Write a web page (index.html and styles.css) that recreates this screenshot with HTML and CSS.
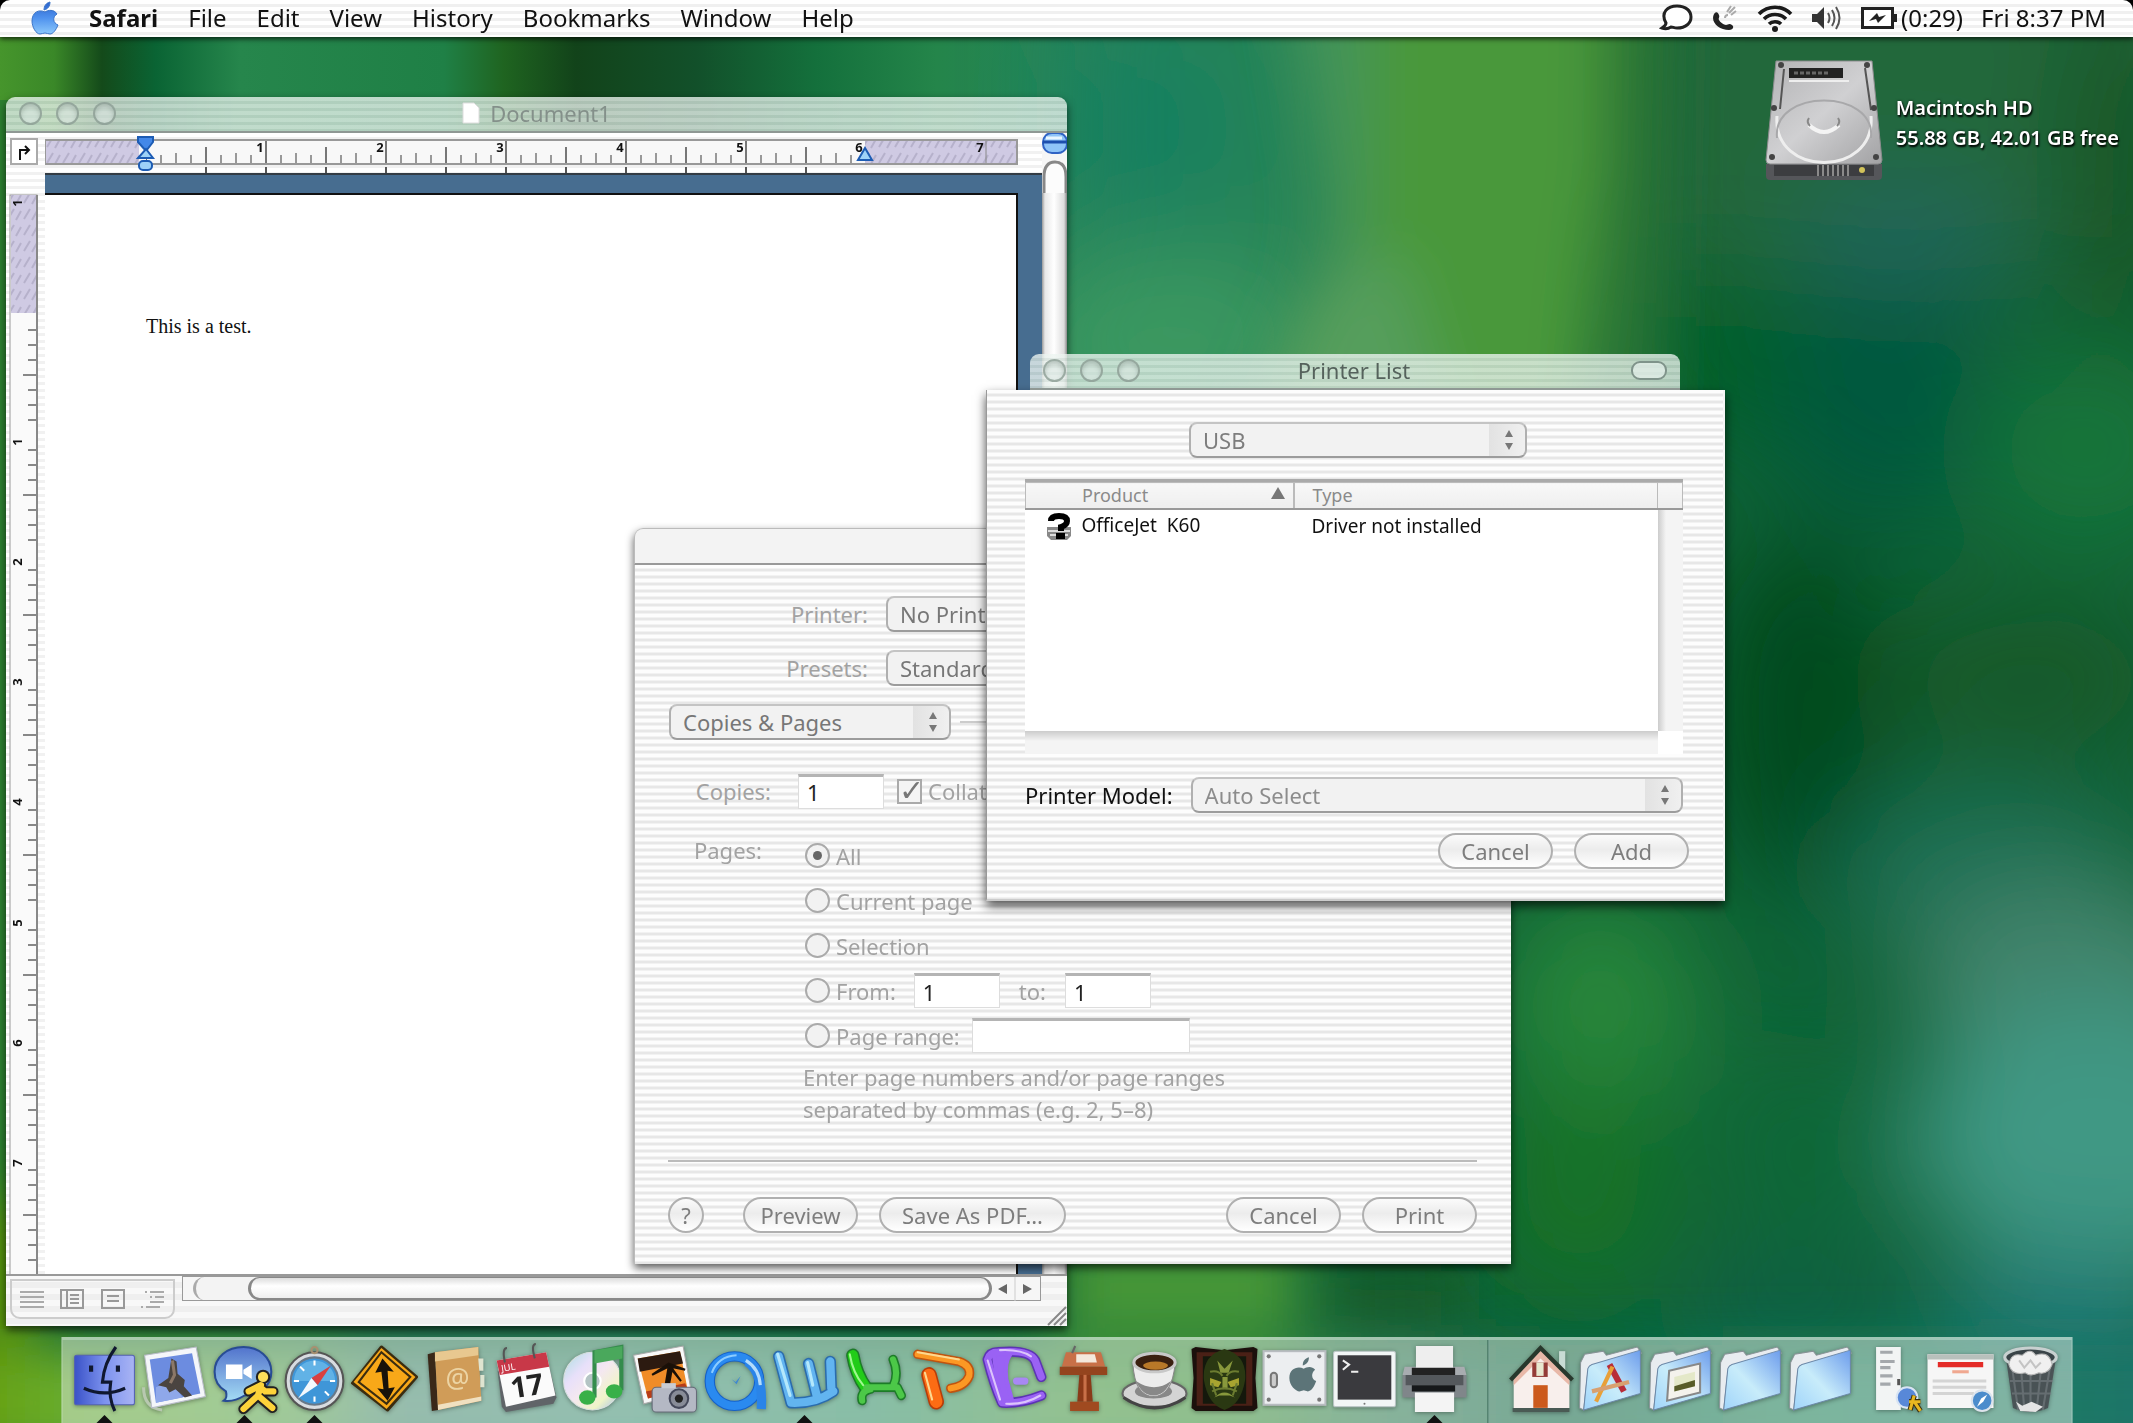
FILE: index.html
```html
<!DOCTYPE html>
<html lang="en">
<head>
<meta charset="utf-8">
<title>Desktop</title>
<link rel="stylesheet" href="styles.css">
</head>
<body>
<svg class="wallpaper" viewBox="0 0 2133 1423" preserveAspectRatio="none" aria-hidden="true">
  <defs>
    <filter id="b1" x="-50%" y="-50%" width="200%" height="200%"><feGaussianBlur stdDeviation="28"/></filter>
    <filter id="b2" x="-50%" y="-50%" width="200%" height="200%"><feGaussianBlur stdDeviation="50"/></filter>
    <linearGradient id="strip" x1="0" x2="1" y1="0" y2="0">
      <stop offset="0" stop-color="#46952c"/><stop offset=".045" stop-color="#3a8828"/><stop offset=".085" stop-color="#144a1a"/><stop offset=".13" stop-color="#0a6434"/><stop offset=".2" stop-color="#26864c"/><stop offset=".37" stop-color="#1f8046"/><stop offset=".42" stop-color="#1f6420"/><stop offset=".48" stop-color="#12431a"/><stop offset=".58" stop-color="#12502a"/><stop offset=".68" stop-color="#14703c"/><stop offset=".78" stop-color="#24854a"/><stop offset=".87" stop-color="#258458"/><stop offset="1" stop-color="#27805f"/>
    </linearGradient>
    <linearGradient id="low" x1="0" x2="1" y1="0" y2="0">
      <stop offset="0" stop-color="#659a00"/><stop offset=".06" stop-color="#6aaf30"/><stop offset=".16" stop-color="#5fa850"/><stop offset=".2" stop-color="#4c8c78"/><stop offset=".3" stop-color="#45947e"/><stop offset=".42" stop-color="#2f9068"/><stop offset=".5" stop-color="#45983c"/><stop offset=".57" stop-color="#3f9336"/><stop offset=".64" stop-color="#2d7a55"/><stop offset=".72" stop-color="#0c6244"/><stop offset=".82" stop-color="#148058"/><stop offset="1" stop-color="#20746c"/>
    </linearGradient>
  </defs>
  <rect width="2133" height="1423" fill="#0f6236"/>
  <rect width="1200" height="700" fill="url(#strip)"/>
  <rect y="100" width="40" height="1230" fill="#2c8030"/>
  <g filter="url(#b2)">
    <rect x="1075" y="-60" width="300" height="500" fill="#268456"/>
    <ellipse cx="1150" cy="130" rx="80" ry="110" fill="#178060"/>
    <ellipse cx="1160" cy="350" rx="150" ry="100" fill="#3a9860"/>
    <rect x="1640" y="-60" width="560" height="330" fill="#22683a"/>
    <ellipse cx="1900" cy="240" rx="110" ry="70" fill="#21665a"/>
    <ellipse cx="1740" cy="360" rx="90" ry="80" fill="#005e28"/>
    <ellipse cx="1890" cy="400" rx="120" ry="120" fill="#00583c"/>
    <ellipse cx="2120" cy="170" rx="50" ry="190" fill="#125224"/>
    <ellipse cx="2090" cy="450" rx="120" ry="100" fill="#18743a"/>
    <ellipse cx="1800" cy="710" rx="90" ry="180" fill="#02481e"/>
    <ellipse cx="2030" cy="680" rx="150" ry="90" fill="#195a2c"/>
    <ellipse cx="1980" cy="870" rx="150" ry="80" fill="#1a7054"/>
    <ellipse cx="2070" cy="980" rx="160" ry="100" fill="#43836a"/>
    <ellipse cx="2100" cy="1140" rx="190" ry="140" fill="#3f9884"/>
    <ellipse cx="1600" cy="1010" rx="100" ry="120" fill="#26863a"/>
    <ellipse cx="1580" cy="1190" rx="90" ry="110" fill="#137228"/>
    <ellipse cx="1800" cy="1150" rx="90" ry="120" fill="#0a6838"/>
    <ellipse cx="1790" cy="1320" rx="130" ry="60" fill="#085f44"/>
    <ellipse cx="2060" cy="1340" rx="130" ry="90" fill="#1d7670"/>
  </g>
  <g filter="url(#b1)">
    <path d="M1300-60 1620-60 1600 200 1580 460 1340 460 1370 200z" fill="#4a983a"/>
    <path d="M1280-60 1370-60 1370 200 1340 460 1290 460 1320 200z" fill="#45945a"/>
    <path d="M1300 300 1400 250 1460 460 1240 460z" fill="#559e5c"/>
    <path d="M1605-60 1670-60 1660 420 1600 420z" fill="#2a7436"/>
    <rect x="-60" y="1345" width="2260" height="120" fill="url(#low)"/>
    <rect x="1060" y="1240" width="240" height="90" fill="#4a9a38"/>
    <rect x="1340" y="1270" width="120" height="60" fill="#155a28"/>
    <rect x="-30" y="1200" width="60" height="150" fill="#619400"/>
  </g>
</svg>

<header class="menubar">
  <nav class="menus" aria-label="Application menus">
    <button class="menu apple" aria-label="Apple menu"><svg viewBox="0 0 28 34"><defs><linearGradient id="ap" x1="0" x2="0" y1="0" y2="1"><stop offset="0" stop-color="#2a62cc"/><stop offset=".5" stop-color="#4f92ee"/><stop offset="1" stop-color="#8cc8fb"/></linearGradient></defs><path fill="url(#ap)" stroke="#3a74c8" d="M19 1c0 4-2 7-6 8 0-4 2-7 6-8zM14 11c3-2 9-3 12 2-5 3-4 9 1 11-2 5-5 9-8 9-2 0-3-1-5-1s-3 1-5 1C5 33 1 26 1 20c0-9 7-12 13-9z"/></svg></button>
    <button class="menu app-name">Safari</button>
    <button class="menu">File</button>
    <button class="menu">Edit</button>
    <button class="menu">View</button>
    <button class="menu">History</button>
    <button class="menu">Bookmarks</button>
    <button class="menu">Window</button>
    <button class="menu">Help</button>
  </nav>
  <div class="extras">
    <svg width="34" height="28" viewBox="0 0 34 28"><path d="M3 24c3-2 4-3 4-5C1 8 9 2 18 2s14 5 14 11-5 11-14 11c-3 0-4-1-6-1-3 2-6 2-9 1z" fill="#fff" stroke="#222" stroke-width="3"/></svg>
    <svg width="28" height="28" viewBox="0 0 28 28"><path d="M3 10c2-3 4-2 5 1s-1 3 0 5 5 5 7 5 3-2 6 0 0 5-3 5C8 26-1 18 3 10z" fill="#222"/><path d="M14 14c0-2 1-3 3-3M18 9l6-6M20 11l5-4M16 8l4-6" stroke="#aaa" stroke-width="2" fill="none"/></svg>
    <svg width="36" height="28" viewBox="0 0 36 28"><g fill="none" stroke="#1a1a1a" stroke-width="3.6"><path d="M2 10c9-9 23-9 32 0M7 15c6-6 16-6 22 0M12 20c3-3 9-3 12 0"/></g><circle cx="18" cy="25" r="3" fill="#1a1a1a"/></svg>
    <svg width="32" height="28" viewBox="0 0 32 28"><path d="M1 10h5l7-7v22l-7-7H1z" fill="#333"/><path d="M17 9q3 5 0 10M21 6q5 8 0 16M25 3q7 11 0 22" fill="none" stroke="#555" stroke-width="2"/></svg>
    <span class="battery"><svg width="36" height="24" viewBox="0 0 36 24"><rect x="1.500" y="2.500" width="30" height="19" fill="#fff" stroke="#222" stroke-width="3"/><path d="M33 8h3v8h-3z" fill="#222"/><path d="M8 15l8-8 2 4 7-2-8 8-2-4z" fill="#222"/></svg>(0:29)</span>
    <time>Fri 8:37 PM</time>
  </div>
</header>

<main class="desktop">
  <a class="disk" href="#disk">
    <svg width="120" height="130" viewBox="0 0 120 130"><defs><linearGradient id="hd" x1="0" x2="1" y1="0" y2="1"><stop offset="0" stop-color="#b2b2b4"/><stop offset=".5" stop-color="#d0d0d2"/><stop offset="1" stop-color="#a2a2a4"/></linearGradient></defs>
    <path d="M2 106h116v12q0 4-4 4H6q-4 0-4-4z" fill="#55565a"/><path d="M10 107h100v11H10z" fill="#3c3d40"/><path d="M54 107v11m5-11v11m5-11v11m5-11v11m5-11v11m5-11v11m5-11v11" stroke="#8a8a8a" stroke-width="2"/><circle cx="98" cy="112" r="3" fill="#d2c35a"/>
    <path d="M12 3h96l10 99q0 4-4 4H6q-4 0-4-4z" fill="url(#hd)" stroke="#8b8b8d"/>
    <path d="M13 58C8 120 112 120 107 58" fill="none" stroke="#eee" stroke-width="3"/><path d="M13 80C8 30 112 30 107 80" fill="none" stroke="#a8a8aa" stroke-width="2"/>
    <path d="M45 67q15 14 30 0" fill="none" stroke="#f4f4f4" stroke-width="4"/><path d="M45 60q-3 4 1 8m28-8q3 4-1 8" stroke="#888" fill="none" stroke-width="2"/>
    <path d="M25 10h54v10H25z" fill="#222"/><path d="M30 15h36" stroke="#666" stroke-width="3" stroke-dasharray="4 2"/><path d="M25 23h60" stroke="#eee" stroke-width="2"/><path d="M101 10l6 42M20 11l-4 40" stroke="#555" stroke-width="2"/>
    <g fill="#444"><circle cx="17" cy="7" r="3"/><circle cx="103" cy="7" r="3"/><circle cx="10" cy="50" r="3"/><circle cx="110" cy="50" r="3"/><circle cx="8" cy="99" r="3"/><circle cx="112" cy="99" r="3"/></g></svg>
    <span class="disk-label">Macintosh HD<br>55.88 GB, 42.01 GB free</span>
  </a>

  <section class="window document" aria-label="Document1">
    <div class="titlebar">
      <span class="lights"><button class="light" aria-label="Close"></button><button class="light" aria-label="Minimize"></button><button class="light" aria-label="Zoom"></button></span>
      <h1 class="title"><svg width="18" height="22" viewBox="0 0 18 22"><path d="M1 1h11l5 5v15H1z" fill="#fff" stroke="#ddd"/></svg>Document1</h1>
    </div>
    <div class="editor">
      <div class="left-rail">
        <button class="tab-stop" aria-label="Tab stop"><svg width="18" height="18" viewBox="0 0 18 18"><path d="M5 17V7h8M10 3l4 4-4 4" fill="none" stroke="#111" stroke-width="2"/></svg></button>
        <svg class="vruler" width="39" height="1102" viewBox="0 0 39 1102"><defs>
          <pattern id="hatch" width="16" height="16" patternUnits="userSpaceOnUse"><rect width="16" height="16" fill="#cfcae3"/><path d="M2 14l6-10M10 15l5-9" stroke="#b6b1cb" stroke-width="2"/></pattern>
          <pattern id="vt" y="142" width="39" height="120" patternUnits="userSpaceOnUse"><path d="M22 15h8m-8 15h8m-8 15h8m-13 15h13m-8 15h8m-8 15h8m-8 15h8" stroke="#888" stroke-width="2"/></pattern></defs>
          <rect x="4" y="22" width="27" height="1090" fill="#fafafa" stroke="#999"/><rect x="5" y="22" width="25" height="118" fill="url(#hatch)"/><rect x="4" y="142" width="27" height="970" fill="url(#vt)"/><path d="M31 22v1080" stroke="#888" stroke-width="2"/>
          <g font-size="13" font-weight="700" text-anchor="middle" fill="#111"><text transform="translate(16 30) rotate(-90)">1</text><text transform="translate(16 269) rotate(-90)">1</text><text transform="translate(16 389) rotate(-90)">2</text><text transform="translate(16 509) rotate(-90)">3</text><text transform="translate(16 629) rotate(-90)">4</text><text transform="translate(16 750) rotate(-90)">5</text><text transform="translate(16 870) rotate(-90)">6</text><text transform="translate(16 990) rotate(-90)">7</text></g>
        </svg>
      </div>
      <div class="page-column">
        <svg class="hruler" width="997" height="40" viewBox="0 0 997 40"><defs>
          <pattern id="ht" x="101" width="120" height="40" patternUnits="userSpaceOnUse"><path d="M0 7v23M120 7v23M60 14v16" stroke="#777" stroke-width="2"/><path d="M15 22v8m15-10v10m15-8v8m30-8v8m15-10v10m15-8v8" stroke="#999" stroke-width="2"/></pattern></defs>
          <rect x="0" y="7" width="972" height="24" fill="#f8f8f8"/><rect x="101" y="7" width="714" height="24" fill="url(#ht)"/><rect x="0" y="7" width="94" height="24" fill="url(#hatch)"/><rect x="820" y="7" width="152" height="24" fill="url(#hatch)"/><path d="M941 8v22" stroke="#888"/><rect x="0" y="7" width="972" height="24" fill="none" stroke="#999" stroke-width="2"/>
          <path d="M161 34v6m60-6v6m60-6v6m60-6v6m60-6v6m60-6v6m60-6v6m60-6v6m60-6v6m60-6v6m60-6v6" stroke="#555" stroke-width="2"/>
          <g font-size="13" font-weight="700" text-anchor="middle" fill="#111"><text x="215" y="19">1</text><text x="335" y="19">2</text><text x="455" y="19">3</text><text x="575" y="19">4</text><text x="695" y="19">5</text><text x="814" y="19">6</text><text x="935" y="19">7</text></g>
          <g fill="#9ed2f8" stroke="#1d5cb4" stroke-width="2"><path d="M93 4h15v5l-7 9-8-9z" fill="#4388e8"/><path d="M101 16l7 9H93z"/><rect x="94" y="28" width="13" height="9" rx="4"/><path d="M820 15l7 12h-14z"/></g>
        </svg>
        <div class="canvas"><article class="sheet">This is a test.</article></div>
      </div>
      <div class="vscroll">
        <svg width="25" height="60" viewBox="0 0 25 60"><rect x="1" y="0" width="24" height="20" rx="9" fill="#8fc4f8" stroke="#3063c4" stroke-width="2"/><path d="M1 9h24" stroke="#1d4fae" stroke-width="3"/><path d="M4 5h16" stroke="#e8f6ff" stroke-width="3"/><path d="M2 60V44Q2 29 13 29t11 15v16" fill="#fcfcfc" stroke="#888" stroke-width="3"/></svg>
      </div>
    </div>
    <div class="statusbar">
      <div class="views">
        <button aria-label="Normal view"><svg width="24" height="20" viewBox="0 0 24 20"><path d="M0 3h24M0 8h24M0 13h24M0 18h24" stroke="#aaa" stroke-width="2"/></svg></button>
        <button aria-label="Online layout view"><svg width="24" height="20" viewBox="0 0 24 20"><path d="M1 1h22v18H1zM7 1v18M10 6h9M10 10h9M10 14h9" fill="none" stroke="#999" stroke-width="2"/></svg></button>
        <button aria-label="Page layout view"><svg width="24" height="20" viewBox="0 0 24 20"><path d="M1 1h22v18H1zM6 7h12M6 12h12" fill="none" stroke="#999" stroke-width="2"/></svg></button>
        <button aria-label="Outline view"><svg width="24" height="20" viewBox="0 0 24 20"><path d="M0 18h2M5 18h14M4 3h2M9 3h14M9 8h2M14 8h9M9 13h14" stroke="#aaa" stroke-width="2"/></svg></button>
      </div>
      <div class="hscroll"><div class="htrack"><div class="thumb"></div></div>
        <svg width="48" height="24" viewBox="0 0 48 24"><path d="M15 7v10L6 12zM31 7v10l9-5z" fill="#666"/><path d="M23 0v24" stroke="#ccc"/></svg></div>
      <svg class="grip" width="22" height="22" viewBox="0 0 22 22"><path d="M3 21L21 3M9 21L21 9M15 21l6-6" stroke="#888" stroke-width="2"/></svg>
    </div>
  </section>

  <section class="window print" aria-label="Print">
    <div class="titlebar plain"></div>
    <form class="print-body">
      <div class="row"><label class="wide" for="printer">Printer:</label><span class="popup w400"><select id="printer"><option>No Printer Selected</option></select><svg width="10" height="20" viewBox="0 0 10 20"><path d="M5 0l4 7H1zM5 20l4-7H1z"/></svg></span></div>
      <div class="row"><label class="wide" for="presets">Presets:</label><span class="popup w400"><select id="presets"><option>Standard</option></select><svg width="10" height="20" viewBox="0 0 10 20"><path d="M5 0l4 7H1zM5 20l4-7H1z"/></svg></span></div>
      <div class="row section-row"><span class="popup w282"><select aria-label="Section"><option>Copies &amp; Pages</option></select><svg width="10" height="20" viewBox="0 0 10 20"><path d="M5 0l4 7H1zM5 20l4-7H1z"/></svg></span><span class="rule"></span></div>
      <div class="row copies"><label class="narrow" for="copies">Copies:</label><input class="field num" id="copies" type="text" value="1"><input class="check" type="checkbox" id="collate" checked><label for="collate">Collated</label></div>
      <fieldset class="pages">
        <legend>Pages:</legend>
        <div class="choices">
          <div class="choice"><input type="radio" name="pages" id="all" checked><label for="all">All</label></div>
          <div class="choice"><input type="radio" name="pages" id="current"><label for="current">Current page</label></div>
          <div class="choice"><input type="radio" name="pages" id="selection"><label for="selection">Selection</label></div>
          <div class="choice"><input type="radio" name="pages" id="from"><label for="from">From:</label><input class="field num first" type="text" value="1" aria-label="First page"><label class="to" for="last">to:</label><input class="field num" id="last" type="text" value="1"></div>
          <div class="choice"><input type="radio" name="pages" id="range"><label for="range">Page range:</label><input class="field long" type="text" aria-label="Page range"></div>
          <p class="hint">Enter page numbers and/or page ranges<br>separated by commas (e.g. 2, 5–8)</p>
        </div>
      </fieldset>
      <hr>
      <div class="actions"><button type="button" class="aqua help" aria-label="Help">?</button><button type="button" class="aqua w115">Preview</button><button type="button" class="aqua w187">Save As PDF…</button><span class="spring"></span><button type="button" class="aqua w115">Cancel</button><button type="button" class="aqua w115">Print</button></div>
    </form>
  </section>

  <section class="printer-list" aria-label="Printer List">
    <div class="titlebar list-title">
      <span class="lights"><button class="light" aria-label="Close"></button><button class="light" aria-label="Minimize"></button><button class="light" aria-label="Zoom"></button></span>
      <h2 class="title">Printer List</h2>
      <button class="pill" aria-label="Toggle toolbar"></button>
    </div>
    <form class="sheet-body">
      <span class="popup w338 centered"><select aria-label="Connection"><option>USB</option></select><svg width="10" height="20" viewBox="0 0 10 20"><path d="M5 0l4 7H1zM5 20l4-7H1z"/></svg></span>
      <div class="table-box">
        <table>
          <thead><tr><th class="product">Product<svg width="14" height="12" viewBox="0 0 14 12"><path d="M7 0l7 12H0z" fill="#777"/></svg></th><th class="type">Type</th><th class="corner"></th></tr></thead>
          <tbody><tr><td class="product"><svg width="28" height="28" viewBox="0 0 28 28"><path d="M2 14h24v9l-4 4H6l-4-4z" fill="#888"/><path d="M3 18h22M5 22h18" stroke="#ddd" stroke-width="2"/><path d="M6 8q0-5 8-5t8 5q0 4-6 6v4" fill="none" stroke="#000" stroke-width="6"/><path d="M11 20h9v6h-9z"/></svg><span class="pre">OfficeJet  K60</span></td><td class="type">Driver not installed</td><td class="gutter"></td></tr></tbody>
        </table>
        <div class="table-rest"></div>
        <div class="table-scroll"><i></i></div>
      </div>
      <div class="model"><label for="model">Printer Model:</label><span class="popup"><select id="model"><option>Auto Select</option></select><svg width="10" height="20" viewBox="0 0 10 20"><path d="M5 0l4 7H1zM5 20l4-7H1z"/></svg></span></div>
      <div class="actions sheet-actions"><button type="button" class="aqua w115">Cancel</button><button type="button" class="aqua w115">Add</button></div>
    </form>
  </section>
</main>

<nav class="dock" aria-label="Dock">
  <button class="tile running" aria-label="Finder"><svg class="icon" viewBox="0 0 64 64"><defs><linearGradient id="fi" x1="0" x2="1"><stop offset="0" stop-color="#3a52c8"/><stop offset=".5" stop-color="#7c92ee"/><stop offset="1" stop-color="#a9b4f4"/></linearGradient></defs><rect x="3" y="9" width="58" height="48" rx="2" fill="url(#fi)" stroke="#5462b4"/><path d="M43 1C35 12 31 22 30 35h8c-2 12 0 20 4 28M12 41q20 9 40 0" fill="none" stroke="#101830" stroke-width="3"/><path d="M19 19v6m26-6v6" stroke="#101830" stroke-width="4"/></svg></button>
  <button class="tile" aria-label="Mail"><svg class="icon" viewBox="0 0 64 64"><path d="M2 40q0 20 18 22" stroke="#b8c8b0" stroke-width="3" fill="none"/><path d="M3 9l50-8 9 48-52 11z" fill="#f4f6fa" stroke="#b8bcc8"/><path d="M8 13l41-6 8 39-43 9z" fill="#6c8ce0"/><path d="M14 40l14-6 12 16-26 5z" fill="#8fa8ea"/><path d="M29 12l5 3 1 12 7 6-1 6 8 9-7 2-9-8-6 3-3-5-8-2 10-7z" fill="#4a4440"/><path d="M30 14l2 14-4 8" stroke="#8c7868" stroke-width="3" fill="none"/></svg></button>
  <button class="tile running" aria-label="iChat"><svg class="icon" viewBox="0 0 64 64"><defs><linearGradient id="ic" x1="0" x2="0" y1="0" y2="1"><stop offset="0" stop-color="#5273cc"/><stop offset="1" stop-color="#a4dcf4"/></linearGradient></defs><path d="M31 1c15 0 27 10 27 24S46 48 32 48c-8 5-14 6-20 5 3-2 3-5 2-9C7 40 3 33 3 25 3 11 15 1 31 1z" fill="url(#ic)" stroke="#284c94" stroke-width="2"/><path d="M14 18h16v14H14zM31 23l8-5v14l-8-5z" fill="#fff"/><g stroke="#222" stroke-width="10" fill="none" stroke-linecap="round"><path d="M48 38l-3 10-14 13M45 48l14 12M36 44l10-5 6 5 8 0"/></g><circle cx="50" cy="30" r="7" fill="#222"/><g stroke="#fdd33a" stroke-width="6" fill="none" stroke-linecap="round"><path d="M48 38l-3 10-14 13M45 48l14 12M36 44l10-5 6 5 8 0"/></g><circle cx="50" cy="30" r="5" fill="#fde05a"/></svg></button>
  <button class="tile running" aria-label="Safari"><svg class="icon" viewBox="0 0 64 64"><circle cx="32" cy="34" r="28" fill="#d8dce0" stroke="#555" stroke-width="2"/><circle cx="32" cy="34" r="23" fill="#3f96d8" stroke="#687888" stroke-width="2"/><path d="M12 34a20 20 0 0 1 40 0z" fill="#78c4f0" opacity=".6"/><path d="M48 19L35 38l-6-7z" fill="#d84040"/><path d="M16 51l13-20 6 7z" fill="#f4f8fc"/><path d="M32 14v5m0 30v5M12 34h5m30 0h5M18 20l4 4m20 20l4 4" stroke="#fff" stroke-width="2"/><circle cx="32" cy="4" r="3" fill="none" stroke="#a89070" stroke-width="2"/></svg></button>
  <button class="tile" aria-label="Directions"><svg class="icon" viewBox="0 0 64 64"><path d="M29 1l34 29-28 32L1 36z" fill="#3a2c10" stroke="#3a2c10" stroke-width="3" stroke-linejoin="round"/><path d="M29 2l33 28-28 31L2 35z" fill="#f8a818"/><path d="M29 6l28 24-23 26L7 35z" fill="none" stroke="#3a2c10" stroke-width="2"/><path d="M30 12l11 13-6-1 1 17 6-1-7 13-10-12 6 1-2-17-6 1z" fill="#18120a"/></svg></button>
  <button class="tile" aria-label="Address Book"><svg class="icon" viewBox="0 0 64 64"><path d="M6 8l7-2 3 56-6 1z" fill="#3a2818"/><path d="M13 6l42-5 3 52-42 9z" fill="#d09c58"/><path d="M13 6l42-5v8l-42 6z" fill="#e8c890"/><path d="M16 62l42-9v-4l-42 8z" fill="#f0e0c0"/><path d="M55 12h5v12h-4zM57 28h4v12h-4z" fill="#dfe4d0"/><text x="35" y="41" font-size="26" text-anchor="middle" fill="#ecd4a4">@</text></svg></button>
  <button class="tile" aria-label="iCal"><svg class="icon" viewBox="0 0 64 64"><path d="M6 24l50-4 7 30-3 6-46 8-4-5z" fill="#606468"/><path d="M5 14l48-8 9 42-48 11z" fill="#fbfbfb"/><path d="M5 14l48-8 3 14-48 8z" fill="#c83848"/><path d="M13 16q-3-14 2-14M42 12q-4-14 1-14" fill="none" stroke="#555" stroke-width="2"/><text x="10" y="25" font-size="9" fill="#fff" transform="rotate(-9 10 25)">JUL</text><text x="20" y="51" font-size="28" font-weight="700" fill="#222" transform="rotate(-9 20 51)">17</text></svg></button>
  <button class="tile" aria-label="iTunes"><svg class="icon" viewBox="0 0 64 64"><defs><linearGradient id="cd" x1="0" x2="1" y1="0" y2="1"><stop offset="0" stop-color="#a8e0e0"/><stop offset=".3" stop-color="#e8e0fa"/><stop offset=".5" stop-color="#f4e8f0"/><stop offset=".75" stop-color="#f0f4c8"/><stop offset="1" stop-color="#98b8f0"/></linearGradient></defs><circle cx="30" cy="34" r="28" fill="url(#cd)" stroke="#d8e0e0"/><circle cx="30" cy="34" r="8" fill="#b4c4c4" stroke="#fff" stroke-width="2"/><path d="M32 50V6l26-5v42" fill="none" stroke="#348c4c" stroke-width="4"/><path d="M32 4l27-4v12l-27 5z" fill="#4aa85c"/><ellipse cx="25" cy="50" rx="8" ry="7" fill="#38b048"/><ellipse cx="51" cy="44" rx="8" ry="7" fill="#38b048"/></svg></button>
  <button class="tile" aria-label="iPhoto"><svg class="icon" viewBox="0 0 64 64"><path d="M2 9l48-9 8 44-46 12z" fill="#f8f8f8" stroke="#aaa"/><path d="M6 12l41-7 7 35-38 11z" fill="#f08c28"/><path d="M6 12l41-7 3 12-42 8z" fill="#2c1a10"/><path d="M14 44l38-8 2 5-38 10z" fill="#b83c18"/><path d="M32 44l4-24-16 8 16-11 16 6-14-3 10 14-9-11-4 22z" fill="#1a1008" stroke="#1a1008" stroke-width="2"/><rect x="20" y="40" width="43" height="24" rx="4" fill="#b4b8c4" stroke="#666a78"/><path d="M29 36h14v5H29z" fill="#c8ccd4"/><circle cx="46" cy="51" r="9" fill="#888c98" stroke="#44485a" stroke-width="2"/><circle cx="46" cy="51" r="4" fill="#222"/></svg></button>
  <button class="tile" aria-label="QuickTime"><svg class="icon" viewBox="0 0 64 64"><circle cx="32" cy="34" r="24" fill="none" stroke="#1560c8" stroke-width="10"/><circle cx="32" cy="34" r="24" fill="none" stroke="#2a8af0" stroke-width="8"/><path d="M10 26q6-16 24-17" fill="none" stroke="#8cccff" stroke-width="2"/><path d="M44 15q16 10 14 46" stroke="#2a84e8" stroke-width="9" fill="none"/><path d="M43 14q13 8 14 24" stroke="#b4dcfc" stroke-width="3" fill="none"/><path d="M29 32l4 3 5-6-4 8z" fill="#3f88d0"/></svg></button>
  <button class="tile running" aria-label="Word"><svg class="icon" viewBox="0 0 64 64"><g fill="none" stroke-linecap="round" stroke-linejoin="round"><path d="M7 10l12 45q24 1 41-11M36 17l8 32M57 15l1 26" stroke="#2a6cae" stroke-width="11"/><path d="M7 10l12 45q24 1 41-11M36 17l8 32M57 15l1 26" stroke="#62b4f0" stroke-width="8"/><path d="M6 8l12 40M35 16l5 22" stroke="#b4e8fc" stroke-width="3"/></g></svg></button>
  <button class="tile" aria-label="Excel"><svg class="icon" viewBox="0 0 64 64"><g fill="none" stroke-linecap="round" stroke-linejoin="round"><path d="M11 9q3 18 13 32" stroke="#1c7c28" stroke-width="13"/><path d="M24 40h30l4 8M50 13q6 14 0 26M20 53q-2-9 8-11" stroke="#1c7c28" stroke-width="9"/><path d="M11 9q3 18 13 32" stroke="#22cc18" stroke-width="10"/><path d="M24 40h30l4 8M50 13q6 14 0 26M20 53q-2-9 8-11" stroke="#4cc848" stroke-width="6"/><path d="M8 8q3 18 13 30" stroke="#a0f890" stroke-width="2"/></g></svg></button>
  <button class="tile" aria-label="PowerPoint"><svg class="icon" viewBox="0 0 64 64"><g fill="none" stroke-linecap="round" stroke-linejoin="round"><path d="M6 8l40 7q12 4 10 14-4 10-18 12" stroke="#c05410" stroke-width="9"/><path d="M6 8l40 7q12 4 10 14-4 10-18 12" stroke="#fc9824" stroke-width="6"/><path d="M17 28l7 26" stroke="#b83c08" stroke-width="15"/><path d="M17 28l7 26" stroke="#fc6c14" stroke-width="12"/><path d="M6 6l40 7M13 26l7 26" stroke="#fdd890" stroke-width="2"/></g></svg></button>
  <button class="tile" aria-label="Entourage"><svg class="icon" viewBox="0 0 64 64"><g fill="none" stroke-linecap="round" stroke-linejoin="round"><path d="M58 48q-20 8-38 7-8-18-14-42 2-7 10-7 30-3 36 8l6 16" stroke="#5c34b4" stroke-width="10"/><path d="M12 8h16q-6 8-4 24l6 22H18z" fill="#9a62f4" stroke="#9a62f4" stroke-width="4"/><path d="M58 48q-20 8-38 7-8-18-14-42 2-7 10-7 30-3 36 8l6 16" stroke="#9a62f4" stroke-width="7"/><path d="M34 34h8" stroke="#a888f4" stroke-width="7"/><path d="M6 14l12 38M24 56q18 1 33-8M18 4q20-1 30 6" stroke="#dcc4fc" stroke-width="2"/></g></svg></button>
  <button class="tile" aria-label="Keynote"><svg class="icon" viewBox="0 0 64 64"><path d="M14 6l34 0 4 14-42 0z" fill="#c87048"/><path d="M24 8h18l2 8H24z" fill="#f4e8dc"/><path d="M8 20h46v8H8z" fill="#94441e"/><path d="M27 28h11l2 26H25z" fill="#8a3a18"/><path d="M31 28h3v26h-3z" fill="#c87048"/><path d="M18 54h28v9H18z" fill="#a04a20"/><path d="M20 7l3-7" stroke="#666" stroke-width="2"/></svg></button>
  <button class="tile" aria-label="Espresso"><svg class="icon" viewBox="0 0 64 64"><ellipse cx="32" cy="46" rx="31" ry="13" fill="#d4d4d4" stroke="#666" stroke-width="2"/><path d="M2 50q30 20 60 0" stroke="#444" stroke-width="3" fill="none"/><ellipse cx="31" cy="44" rx="18" ry="7" fill="#888"/><path d="M11 17q2 32 20 32t21-32z" fill="#ececec" stroke="#888"/><path d="M14 34q18 12 34 0-6 14-17 14T14 34z" fill="#888"/><ellipse cx="32" cy="16" rx="20" ry="9" fill="#3a2010" stroke="#c8c8c8" stroke-width="3"/><ellipse cx="33" cy="19" rx="12" ry="4" fill="#b87828"/></svg></button>
  <button class="tile" aria-label="Warcraft"><svg class="icon" viewBox="0 0 64 64"><path d="M0 3l4-2 28 3 28-3 4 2-2 28 2 29-4 3H4l-4-3 2-29z" fill="#1c100c"/><path d="M5 6h54v52H5z" fill="#4a2016"/><path d="M11 10h42v46H11z" fill="#14180c"/><path d="M32 3q22 6 20 30-4 24-20 29Q16 57 12 33 10 9 32 3z" fill="#2a3812"/><path d="M18 31l11 4-3 5-8-2zM46 31l-11 4 3 5 8-2z" fill="#a8a430"/><path d="M25 14l7 8 8-8-4 12h-8zM30 30h5v12h-5zM22 50q10-10 20 0l-5-2H27z" fill="#88983c"/><path d="M18 25q8-2 12 4M46 25q-8-2-12 4M20 44q12-6 24 0M20 36l4 12M44 36l-4 12" stroke="#6c7c30" stroke-width="2" fill="none"/></svg></button>
  <button class="tile" aria-label="System Preferences"><svg class="icon" viewBox="0 0 64 64"><rect x="2" y="5" width="60" height="52" fill="#eceef0" stroke="#b8bcc0" stroke-width="2"/><rect x="9" y="26" width="6" height="14" rx="3" fill="#ccc" stroke="#777" stroke-width="2"/><path d="M46 11c0 4-2 7-6 8 0-4 2-7 6-8zM41 22c3-2 8-3 11 1-4 3-4 9 1 11-2 6-5 10-8 10-2 0-3-1-4-1s-2 1-4 1c-4 0-10-6-10-13 0-9 8-12 14-9z" fill="#5c7478"/><g fill="#777"><circle cx="7" cy="10" r="2"/><circle cx="56" cy="10" r="2"/><circle cx="7" cy="52" r="2"/><circle cx="56" cy="52" r="2"/></g></svg></button>
  <button class="tile" aria-label="Terminal"><svg class="icon" viewBox="0 0 64 64"><rect x="2" y="5" width="60" height="54" rx="2" fill="#f2f6f6" stroke="#b8c4c4"/><rect x="6" y="9" width="52" height="43" fill="#3a3a3e"/><path d="M11 14l6 4-6 5M19 25h7" stroke="#eee" stroke-width="2" fill="none"/><circle cx="32" cy="56" r="1" fill="#777"/></svg></button>
  <button class="tile running" aria-label="Printer"><svg class="icon" viewBox="0 0 64 64"><path d="M3 20h58l2 8H1z" fill="#a8acb0"/><path d="M1 28h62v22H1z" fill="#80868a"/><path d="M14 0h36v22H14z" fill="#eee"/><path d="M10 21h42v7H10z" fill="#222"/><path d="M4 28h56v10H4z" fill="#54585c"/><path d="M10 38h42v6H10z" fill="#16181a"/><path d="M13 45h38v19H13z" fill="#f4f4f4"/></svg></button>
  <span class="divider"></span>
  <button class="tile" aria-label="Home"><svg class="icon" viewBox="0 0 64 64"><path d="M50 5h6v22h-6z" fill="#c8dcd4"/><path d="M32 4l28 28v28H6V32z" fill="#f8efec"/><path d="M32 4l-26 28v6L32 12l28 26v-6z" fill="#e8b8a8"/><path d="M3 33L32 2l31 31" fill="none" stroke="#28382c" stroke-width="4"/><path d="M24 16h15v14H24z" fill="#943c38"/><path d="M28 16h7v13h-7z" fill="#e8e8d0"/><path d="M25 38h14v22H25z" fill="#cc5a1c"/><path d="M5 60h55v4H5z" fill="#4a5a54"/></svg></button>
  <button class="tile" aria-label="Applications"><svg class="icon" viewBox="0 0 64 64"><defs><linearGradient id="fo" x1="0" x2="1" y1="1" y2="0"><stop offset="0" stop-color="#a0d4fa"/><stop offset=".45" stop-color="#c8ecfa"/><stop offset="1" stop-color="#6c9cec"/></linearGradient></defs><path d="M3 16l4-8 18-3 3 4 30-8 4 6-52 18-4 37-4-2z" fill="#e8ecf0" stroke="#8a9498"/><path d="M10 22q1-3 4-4L61 4v42L6 62z" fill="url(#fo)" stroke="#6c88a8"/><path d="M31 18l14 26" stroke="#b82c38" stroke-width="6"/><path d="M34 20L18 54" stroke="#e8a038" stroke-width="4"/><path d="M14 44l36-9" stroke="#d8a070" stroke-width="4"/></svg></button>
  <button class="tile" aria-label="Documents"><svg class="icon" viewBox="0 0 64 64"><path d="M3 16l4-8 18-3 3 4 30-8 4 6-52 18-4 37-4-2z" fill="#e8ecf0" stroke="#8a9498"/><path d="M10 22q1-3 4-4L61 4v42L6 62z" fill="url(#fo)" stroke="#6c88a8"/><path d="M21 24l30-7v28l-32 8z" fill="#f4f2ec" stroke="#888" stroke-width="2"/><path d="M26 30l20-5v14l-20 5z" fill="#e4e8c8"/><path d="M26 39l20-6v6l-20 5z" fill="#585c28"/></svg></button>
  <button class="tile" aria-label="Folder"><svg class="icon" viewBox="0 0 64 64"><path d="M3 16l4-8 18-3 3 4 30-8 4 6-52 18-4 37-4-2z" fill="#e8ecf0" stroke="#8a9498"/><path d="M10 22q1-3 4-4L61 4v42L6 62z" fill="url(#fo)" stroke="#6c88a8"/></svg></button>
  <button class="tile" aria-label="Folder"><svg class="icon" viewBox="0 0 64 64"><path d="M3 16l4-8 18-3 3 4 30-8 4 6-52 18-4 37-4-2z" fill="#e8ecf0" stroke="#8a9498"/><path d="M10 22q1-3 4-4L61 4v42L6 62z" fill="url(#fo)" stroke="#6c88a8"/></svg></button>
  <button class="tile" aria-label="Buddy list"><svg class="icon" viewBox="0 0 64 64"><path d="M18 1h24v61H18z" fill="#f2f4f4"/><path d="M22 6h12M22 15h14M22 21h10M22 29h12M22 37h10" stroke="#a4a8ac" stroke-width="3"/><path d="M40 32v6" stroke="#555" stroke-width="3"/><circle cx="48" cy="50" r="10" fill="#5888d8" stroke="#d8e4f4" stroke-width="2"/><path d="M55 48l-4 14m4-8l6 9M50 54h11" stroke="#3a3010" stroke-width="5"/><path d="M55 48l-4 14m4-8l6 9M50 54h11" stroke="#e8b820" stroke-width="3"/></svg></button>
  <button class="tile" aria-label="Browser window"><svg class="icon" viewBox="0 0 64 64"><path d="M0 8h64v52H0z" fill="#f6f6f6"/><path d="M0 8h64v5H0z" fill="#b8c0bc"/><path d="M10 18h44" stroke="#e42c28" stroke-width="5"/><path d="M24 25h16" stroke="#f0a890" stroke-width="3"/><path d="M5 34h52M5 40h52M5 46h40" stroke="#d4d4d4" stroke-width="3"/><circle cx="53" cy="53" r="10" fill="#4c8ccc" stroke="#dde4ec" stroke-width="2"/><path d="M58 47l-4 7-6 5 4-8z" fill="#fff"/></svg></button>
  <button class="tile" aria-label="Trash"><svg class="icon" viewBox="0 0 64 64"><path d="M8 10l7 50q17 8 34 0l8-50z" fill="#484e52" opacity=".9"/><path d="M14 20l6 42M23 24l3 38M32 24v40M42 24l-4 38M51 20l-7 42M12 34h42M14 46h38" stroke="#788084" stroke-width="2" opacity=".6"/><ellipse cx="32" cy="11" rx="25" ry="9" fill="#3a4448" stroke="#c8d0d0" stroke-width="3"/><path d="M11 18q2-12 13-9 8-8 13 0 13-5 16 9-4 10-13 8-8 4-13 0-13 3-16-8z" fill="#f0f0f0" stroke="#b8b8b8"/><path d="M21 14l5 7 6-7 5 7 5-5" stroke="#c4c4c4" stroke-width="2" fill="none"/><path d="M18 54l6 4 9-4 11 5-7 5-15-1z" fill="#e4e4e4"/></svg></button>
</nav>
</body>
</html>
```
FILE: styles.css
```css
* { box-sizing: border-box; }
html, body { height: 100%; }
body {
  margin: 0;
  overflow: hidden;
  display: flex;
  flex-direction: column;
  font-family: "Noto Sans", "Open Sans", sans-serif;
  font-size: 22px;
  line-height: 28px;
  color: #111;
}
button, input, select { font: inherit; color: inherit; margin: 0; }
button { border: 0; background: none; padding: 0; }
svg { display: block; flex: none; }
h1, h2, p { margin: 0; font-weight: 400; font-size: inherit; }

.wallpaper { position: fixed; inset: 0; width: 100%; height: 100%; }

/* Menu bar */
.menubar {
  position: relative;
  isolation: isolate;
  display: flex;
  justify-content: space-between;
  align-items: center;
  height: 37px;
  padding: 0 27px 2px 31px;
  font-size: 24px;
  background: #000;
  box-shadow: 0 2px 5px rgba(0, 0, 0, .7);
}
.menubar::before {
  content: "";
  position: absolute;
  inset: 0;
  z-index: -1;
  border-radius: 10px 10px 0 0;
  background: repeating-linear-gradient(#fff 0 4px, #f0f0f0 4px 7px);
}
.menus { display: flex; align-items: center; gap: 30px; }
.apple svg { width: 28px; height: 34px; }
.app-name { font-weight: 700; }
.extras { display: flex; align-items: center; gap: 18px; }
.battery { display: flex; align-items: center; gap: 4px; }

/* Desktop and its windows */
.desktop { position: relative; flex: 1; }
.disk {
  position: absolute;
  top: 21px;
  right: 14px;
  display: flex;
  align-items: center;
  gap: 12px;
  font-size: 20px;
  line-height: 30px;
  font-weight: 600;
  color: #fff;
  text-decoration: none;
  text-shadow: 1px 2px 2px #000, 0 0 3px rgba(0, 0, 0, .6);
}
.window, .printer-list { position: absolute; display: flex; flex-direction: column; }
.window { box-shadow: 0 4px 9px rgba(0, 0, 0, .65); }
.document { left: 6px; top: 60px; width: 1061px; height: 1229px; border-radius: 9px 9px 0 0; }
.print { left: 634px; top: 491px; width: 877px; border-radius: 9px 9px 0 0; }
.printer-list { left: 986px; top: 317px; width: 739px; }

.titlebar {
  display: flex;
  align-items: center;
  position: relative;
  height: 36px;
  padding-bottom: 2px;
  border-radius: 9px 9px 0 0;
  border-bottom: 2px solid #8f9894;
  background: repeating-linear-gradient(rgba(236, 244, 240, .78) 0 4px, rgba(216, 228, 222, .78) 4px 7px);
  color: #84908a;
}
.plain { height: 37px; background: #f3f3f3; border: 1px solid #bbb; border-bottom: 2px solid #999; }
.lights { display: flex; gap: 14px; padding-left: 13px; }
.light { flex: none; width: 23px; height: 23px; border-radius: 50%; border: 2px solid rgba(110, 130, 120, .6); background: rgba(220, 232, 226, .6); box-shadow: inset 0 3px 4px rgba(90, 110, 100, .3); }
.title { flex: 1; display: flex; justify-content: center; gap: 10px; align-items: center; }
.document .title { padding-right: 110px; }

/* Document window */
.editor { flex: 1; display: flex; min-height: 0; background: repeating-linear-gradient(#fff 0 4px, #f1f1f1 4px 7px); }
.left-rail { width: 39px; display: flex; flex-direction: column; }
.tab-stop { width: 28px; height: 27px; margin: 5px 0 8px 4px; border: 2px solid #aaa; background: #fff; display: grid; place-items: center; flex: none; }
.page-column { flex: 1; display: flex; flex-direction: column; min-width: 0; }
.canvas { flex: 1; padding: 18px 24px 0 0; border-top: 2px solid #333c44; background: #476d90; }
.sheet { height: 100%; background: #fff; border-top: 2px solid #111; border-right: 2px solid #111; padding: 117px 101px; font-family: "Liberation Serif", serif; font-size: 20px; }
.vscroll { width: 25px; background: linear-gradient(90deg, #999, #e8e8e8 3px, #fff 12px, #ddd 22px, #888); }
.vscroll svg { background: #f6f6f6; }
.statusbar { position: relative; display: flex; height: 52px; border-top: 2px solid #999; background: repeating-linear-gradient(#f8f8f8 0 6px, #efefef 6px 12px); padding: 0 26px 0 4px; gap: 7px; }
.views { display: flex; align-items: center; justify-content: space-around; width: 165px; height: 40px; margin-top: 3px; border: 2px solid #ccc; border-radius: 0 0 10px 10px; }
.hscroll { flex: 1; display: flex; height: 25px; border: 1px solid #999; background: #f6f6f6; }
.htrack { flex: 1; border-radius: 12px; border-left: 3px solid #aaa; margin-left: 10px; padding-left: 52px; background: #f3f3f3; }
.thumb { height: 23px; border: 2px solid #888; border-width: 1px 3px 2px; border-radius: 12px; background: linear-gradient(#ddd, #fff 40%, #eee); }
.grip { position: absolute; right: 0; bottom: 0; }

/* Shared controls */
.print-body, .sheet-body { background: repeating-linear-gradient(#fdfdfd 0 3px, #f2f2f2 3px 4px, #e7e7e7 4px 6px, #f2f2f2 6px 7px); }
.popup { position: relative; display: flex; height: 36px; }
.popup select {
  width: 100%;
  appearance: none;
  border: 2px solid #b0b0b0;
  border-top-color: #c4c4c4;
  border-bottom-color: #9c9c9c;
  border-radius: 8px;
  padding: 0 12px;
  background: linear-gradient(90deg, transparent calc(100% - 36px), #e2e2e2 calc(100% - 36px), #f0f0f0), #f2f2f2;
  color: #7d7d7d;
}
.popup svg { position: absolute; right: 13px; top: 8px; fill: #777; pointer-events: none; }
.w400 { width: 400px; }
.w282 { width: 282px; }
.w338 { width: 338px; }
.aqua { height: 36px; border: 2px solid #b0b0b0; border-radius: 18px; background: linear-gradient(#fbfbfb, #ececec 45%, #fff); color: #7d7d7d; }
.w115 { width: 115px; }
.w187 { width: 187px; }
.help { width: 36px; }
.actions { display: flex; align-items: center; gap: 21px; }
.spring { flex: 1; }
.field { height: 35px; border: 1px solid #ddd; border-top: 3px solid #b4b4b4; border-radius: 0; background: #fff; color: #222; padding: 0 8px; }
.num { width: 86px; }
.long { width: 218px; margin-left: 12px; }

/* Print dialog */
.print-body { padding: 22px 34px 31px 33px; color: #a2a2a2; border-left: 1px solid #bbb; }
.print-body .popup select { color: #777; }
.row { display: flex; align-items: center; height: 54px; }
.wide { width: 200px; text-align: right; margin-right: 18px; }
.narrow { width: 103px; text-align: right; }
.section-row { gap: 9px; padding-left: 1px; }
.rule { flex: 1; border-top: 2px solid #ccc; }
.copies { height: 84px; }
.copies .num { margin: 0 13px 0 27px; }
.check { appearance: none; width: 25px; height: 25px; margin-right: 6px; border: 2px solid #aaa; background: #f4f4f4; display: grid; place-items: center; }
.check:checked::before { content: "✓"; font-family: "DejaVu Sans", sans-serif; font-size: 30px; line-height: 20px; font-weight: 700; color: #777; }
.pages { display: flex; border: 0; margin: 0; padding: 0; min-width: 0; }
.pages legend { float: left; width: 94px; padding: 0; line-height: 34px; text-align: right; }
.choices { padding-left: 41px; }
.choice { display: flex; align-items: center; height: 45px; }
.choice input[type="radio"] { appearance: none; width: 25px; height: 25px; margin: 0 6px 0 2px; border: 2px solid #aaa; border-radius: 50%; background: #f2f2f2; display: grid; place-items: center; }
.choice input[type="radio"]:checked::before { content: ""; width: 9px; height: 9px; border-radius: 50%; background: #666; }
.first { margin-left: 18px; }
.to { margin: 0 19px; }
.hint { margin: 3px 0 35px; line-height: 32px; }
hr { border: 0; border-top: 2px solid #bbb; margin: 0 0 35px; }
.help + .aqua { margin-left: 18px; }

/* Printer list */
.list-title { margin: 0 45px 0 44px; }
.list-title .title { color: #55625c; }
.pill { width: 36px; height: 19px; margin-right: 13px; border: 2px solid #7f938a; border-radius: 9px; background: rgba(230, 240, 235, .7); }
.list-title .lights { width: 47px; }
.sheet-body { display: flex; flex-direction: column; padding: 32px 40px 30px 38px; box-shadow: 0 5px 10px rgba(0, 0, 0, .7); border-left: 1px solid #999; border-right: 2px solid #f6f6f6; border-bottom: 2px solid #ccc; }
.centered { align-self: center; margin-left: 8px; }
.table-box { margin-top: 21px; font-size: 19px; border-top: 3px solid #aaa; background: #fff; }
table { width: 100%; border-collapse: collapse; table-layout: fixed; }
th { height: 26px; padding: 0; line-height: 24px; font-size: 18px; font-weight: 400; text-align: left; color: #8a8a8a; background: linear-gradient(#f8f8f8, #eee); border: 1px solid #bbb; border-bottom: 2px solid #999; }
th.product { width: 268px; padding-left: 56px; border-right-width: 2px; }
th.product svg { float: right; margin: 4px 8px 0 0; }
th.type { padding-left: 18px; }
.corner { width: 25px; }
td { height: 34px; padding: 0; }
td.product svg { display: inline-block; vertical-align: middle; margin: 0 9px 0 19px; }
.pre { white-space: pre; }
td.type { padding-left: 18px; }
.gutter { background: linear-gradient(90deg, #ccc, #f4f4f4 8px); }
.table-rest { height: 188px; background: linear-gradient(90deg, #ccc, #f4f4f4 8px) right / 25px 100% no-repeat #fff; }
.table-scroll { display: flex; height: 23px; background: linear-gradient(#ccc, #f4f4f4 10px); }
.table-scroll i { width: 25px; margin-left: auto; background: #fff; }
.model { display: flex; align-items: center; gap: 18px; margin-top: 23px; white-space: nowrap; }
.model .popup { flex: 1; }
.model .popup select { color: #8c8c8c; }
.sheet-actions { justify-content: flex-end; margin: 20px -6px 0 0; }

/* Dock */
.dock {
  position: fixed;
  bottom: 0;
  left: 50%;
  transform: translateX(-50%);
  display: flex;
  height: 86px;
  padding: 0 6px 0 7px;
  background: rgba(226, 236, 228, .5);
  border: solid rgba(230, 245, 235, .35);
  border-width: 3px 1px 0;
}
.tile { position: relative; width: 70px; padding: 6px 2px 0; display: flex; align-items: flex-start; }
.icon { width: 66px; height: 66px; overflow: visible; filter: drop-shadow(0 1px 2px rgba(0, 0, 0, .35)); }
.running::after { content: ""; position: absolute; left: 27px; bottom: 0; border: 8px solid transparent; border-top: 0; border-bottom: 8px solid #111; }
.divider { width: 2px; margin: 0 16px 0 18px; background: #2c5c4c; border-right: 1px solid #a8d0c0; }
```
